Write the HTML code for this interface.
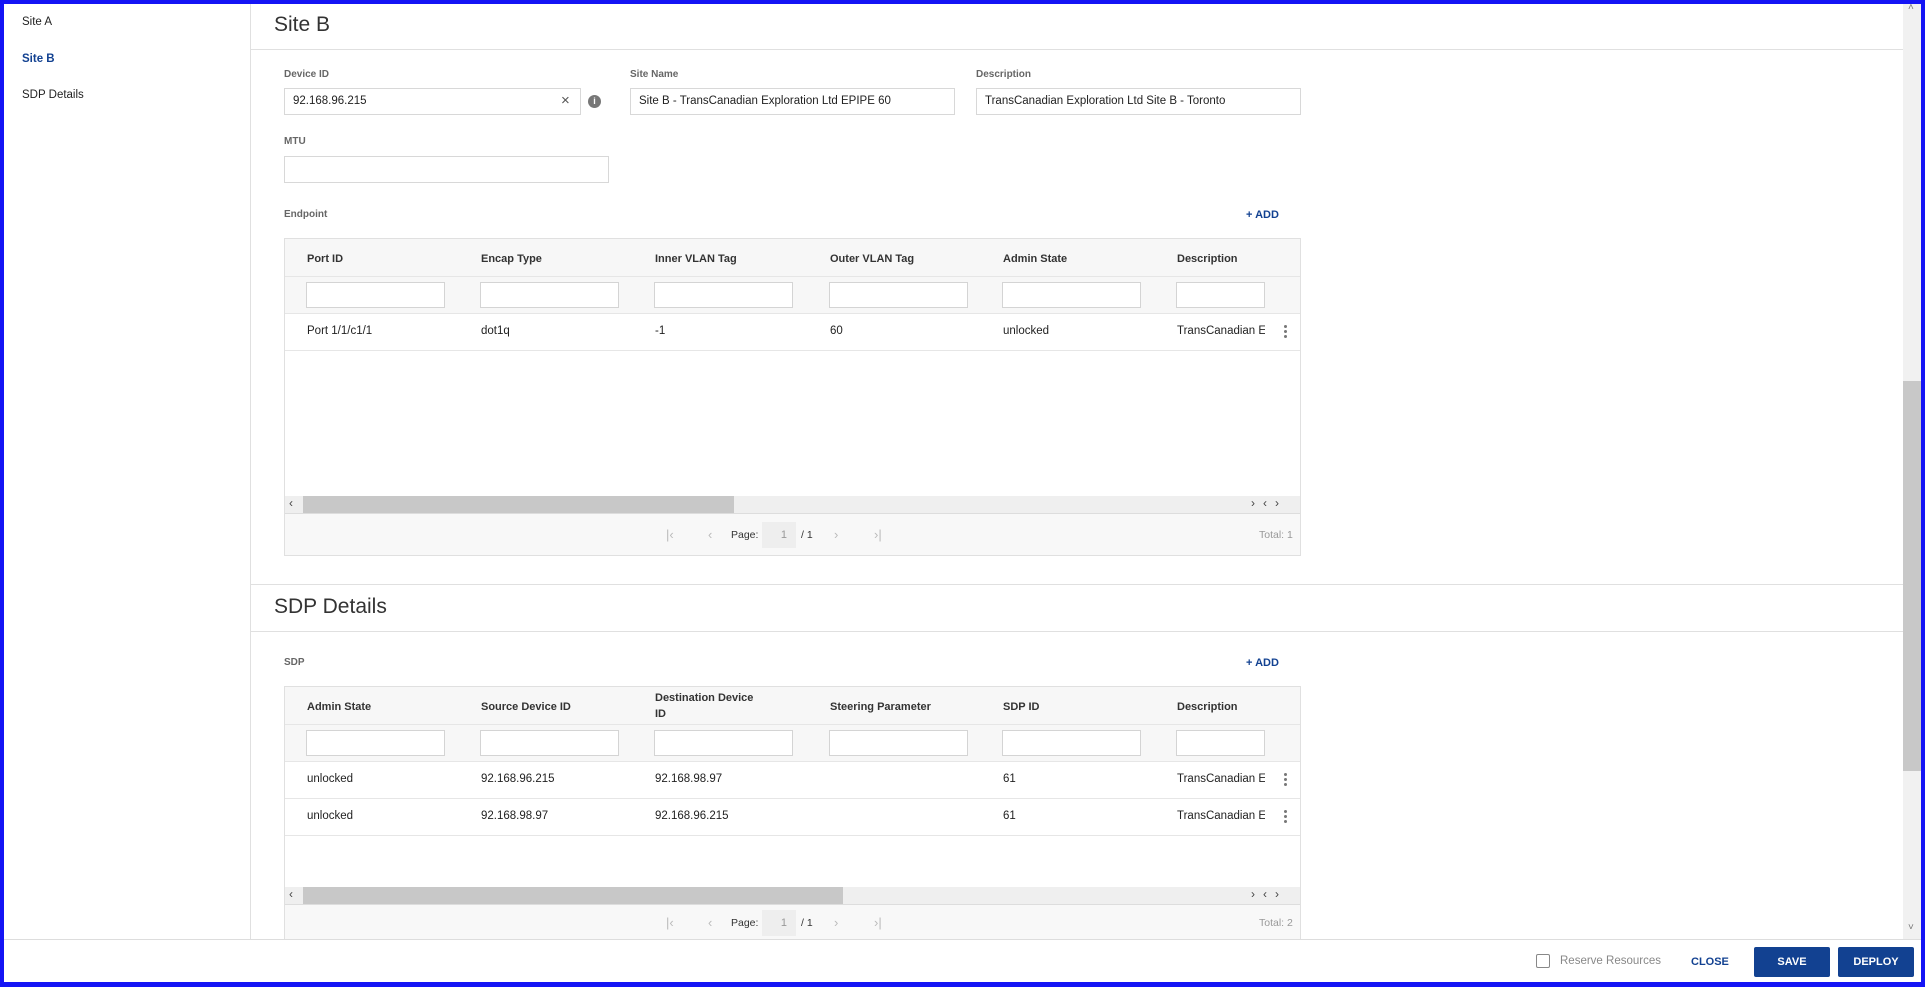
<!DOCTYPE html>
<html><head><meta charset="utf-8"><style>
*{box-sizing:border-box;margin:0;padding:0}
body{width:1925px;height:987px;overflow:hidden;background:#fff;font-family:"Liberation Sans",sans-serif;color:#222;position:relative}
.a{position:absolute}
.frame{position:absolute;left:0;top:0;width:1925px;height:987px;border:4px solid #1414f5;border-top-width:4px;border-bottom-width:5px;z-index:50;pointer-events:none}
.lbl{position:absolute;font-size:10px;font-weight:bold;color:#666}
.inp{position:absolute;border:1px solid #d8d8d8;background:#fff;font-size:11.5px;padding-left:8px;line-height:25px;color:#222}
.tbl{position:absolute;left:284px;width:1017px;border:1px solid #e0e0e0;background:#fff;overflow:hidden}
.th{position:absolute;font-size:11px;font-weight:bold;color:#333}
.td{position:absolute;font-size:11.5px;color:#222}
.fi{position:absolute;width:139px;height:26px;border:1px solid #d4d4d4;background:#fff}
.hl{position:absolute;left:0;right:0;height:1px;background:#e6e6e6}
.add{position:absolute;font-size:11px;font-weight:bold;color:#124191}
.kb{position:absolute;width:3px}
.kb i{display:block;width:3px;height:3px;border-radius:50%;background:#777;margin-bottom:2px}
.pg{position:absolute;font-size:10.5px;color:#999}
</style></head><body>
<div class="frame"></div>

<div class="a" style="left:250px;top:0;width:1px;height:939px;background:#e0e0e0"></div>
<div class="a" style="left:22px;top:16px;font-size:11.5px">Site A</div>
<div class="a" style="left:22px;top:53px;font-size:11.5px;font-weight:bold;color:#124191">Site B</div>
<div class="a" style="left:22px;top:89px;font-size:11.5px">SDP Details</div>

<div class="a" style="left:274px;top:13px;font-size:21px;color:#333">Site B</div>
<div class="a" style="left:251px;top:49px;width:1652px;height:1px;background:#e0e0e0"></div>

<div class="lbl" style="left:284px;top:69px">Device ID</div>
<div class="inp" style="left:284px;top:88px;width:297px;height:27px">92.168.96.215</div>
<div class="a" style="left:561px;top:92px;font-size:15px;color:#555">×</div>
<div class="a" style="left:588px;top:95px;width:13px;height:13px;border-radius:50%;background:#777;color:#fff;font-size:9px;font-weight:bold;text-align:center;line-height:13px">i</div>
<div class="lbl" style="left:630px;top:69px">Site Name</div>
<div class="inp" style="left:630px;top:88px;width:325px;height:27px">Site B - TransCanadian Exploration Ltd EPIPE 60</div>
<div class="lbl" style="left:976px;top:69px">Description</div>
<div class="inp" style="left:976px;top:88px;width:325px;height:27px">TransCanadian Exploration Ltd Site B - Toronto</div>

<div class="lbl" style="left:284px;top:136px">MTU</div>
<div class="inp" style="left:284px;top:156px;width:325px;height:27px"></div>

<div class="lbl" style="left:284px;top:209px">Endpoint</div>
<div class="add" style="left:1246px;top:209px">+ ADD</div>

<div class="tbl" style="top:238px;height:318px">
 <div class="a" style="left:0;top:0;right:0;height:75px;background:#f7f7f7"></div>
 <div class="hl" style="top:37px"></div>
 <div class="hl" style="top:74px"></div>
 <div class="th" style="left:22px;top:14px">Port ID</div>
 <div class="th" style="left:196px;top:14px">Encap Type</div>
 <div class="th" style="left:370px;top:14px">Inner VLAN Tag</div>
 <div class="th" style="left:545px;top:14px">Outer VLAN Tag</div>
 <div class="th" style="left:718px;top:14px">Admin State</div>
 <div class="th" style="left:892px;top:14px">Description</div>
 <div class="fi" style="left:21px;top:43px"></div>
 <div class="fi" style="left:195px;top:43px"></div>
 <div class="fi" style="left:369px;top:43px"></div>
 <div class="fi" style="left:544px;top:43px"></div>
 <div class="fi" style="left:717px;top:43px"></div>
 <div class="fi" style="left:891px;top:43px;width:89px"></div>
 <div class="td" style="left:22px;top:86px">Port 1/1/c1/1</div>
 <div class="td" style="left:196px;top:86px">dot1q</div>
 <div class="td" style="left:370px;top:86px">-1</div>
 <div class="td" style="left:545px;top:86px">60</div>
 <div class="td" style="left:718px;top:86px">unlocked</div>
 <div class="td" style="left:892px;top:86px;width:88px;overflow:hidden;white-space:nowrap">TransCanadian Exploration</div>
 <div class="kb" style="left:999px;top:86px"><i></i><i></i><i></i></div>
 <div class="hl" style="top:111px"></div>
 <div class="a" style="left:0;top:257px;right:0;height:17px;background:#efefef"></div>
 <div class="a" style="left:18px;top:257px;width:431px;height:17px;background:#c8c8c8"></div>
 <div class="a" style="left:4px;top:257px;font-size:12px;color:#444">‹</div>
 <div class="a" style="left:966px;top:257px;font-size:12px;color:#444;letter-spacing:8px">›‹›</div>
 <div class="hl" style="top:274px;background:#ddd"></div>
 <div class="a" style="left:0;top:275px;right:0;height:43px;background:#f8f8f8"></div>
 <div class="pg" style="left:381px;top:288px;font-size:13px;color:#bbb">|‹</div>
 <div class="pg" style="left:423px;top:288px;font-size:13px;color:#bbb">‹</div>
 <div class="pg" style="left:446px;top:290px;color:#333">Page:</div>
 <div class="a" style="left:477px;top:283px;width:34px;height:26px;background:#eee;font-size:11px;color:#999;text-align:right;padding-right:9px;line-height:26px">1</div>
 <div class="pg" style="left:516px;top:290px;color:#333">/ 1</div>
 <div class="pg" style="left:549px;top:288px;font-size:13px;color:#bbb">›</div>
 <div class="pg" style="left:589px;top:288px;font-size:13px;color:#bbb">›|</div>
 <div class="pg" style="left:974px;top:290px">Total: 1</div>
</div>

<div class="a" style="left:251px;top:584px;width:1652px;height:1px;background:#e0e0e0"></div>
<div class="a" style="left:274px;top:595px;font-size:21px;color:#333">SDP Details</div>
<div class="a" style="left:251px;top:631px;width:1652px;height:1px;background:#e0e0e0"></div>
<div class="lbl" style="left:284px;top:657px">SDP</div>
<div class="add" style="left:1246px;top:657px">+ ADD</div>

<div class="tbl" style="top:686px;height:260px">
 <div class="a" style="left:0;top:0;right:0;height:75px;background:#f7f7f7"></div>
 <div class="hl" style="top:37px"></div>
 <div class="hl" style="top:74px"></div>
 <div class="th" style="left:22px;top:14px">Admin State</div>
 <div class="th" style="left:196px;top:14px">Source Device ID</div>
 <div class="th" style="left:370px;top:3px;line-height:16px">Destination Device<br>ID</div>
 <div class="th" style="left:545px;top:14px">Steering Parameter</div>
 <div class="th" style="left:718px;top:14px">SDP ID</div>
 <div class="th" style="left:892px;top:14px">Description</div>
 <div class="fi" style="left:21px;top:43px"></div>
 <div class="fi" style="left:195px;top:43px"></div>
 <div class="fi" style="left:369px;top:43px"></div>
 <div class="fi" style="left:544px;top:43px"></div>
 <div class="fi" style="left:717px;top:43px"></div>
 <div class="fi" style="left:891px;top:43px;width:89px"></div>
 <div class="td" style="left:22px;top:86px">unlocked</div>
 <div class="td" style="left:196px;top:86px">92.168.96.215</div>
 <div class="td" style="left:370px;top:86px">92.168.98.97</div>
 <div class="td" style="left:718px;top:86px">61</div>
 <div class="td" style="left:892px;top:86px;width:88px;overflow:hidden;white-space:nowrap">TransCanadian Exploration</div>
 <div class="kb" style="left:999px;top:86px"><i></i><i></i><i></i></div>
 <div class="hl" style="top:111px"></div>
 <div class="td" style="left:22px;top:123px">unlocked</div>
 <div class="td" style="left:196px;top:123px">92.168.98.97</div>
 <div class="td" style="left:370px;top:123px">92.168.96.215</div>
 <div class="td" style="left:718px;top:123px">61</div>
 <div class="td" style="left:892px;top:123px;width:88px;overflow:hidden;white-space:nowrap">TransCanadian Exploration</div>
 <div class="kb" style="left:999px;top:123px"><i></i><i></i><i></i></div>
 <div class="hl" style="top:148px"></div>
 <div class="a" style="left:0;top:200px;right:0;height:17px;background:#efefef"></div>
 <div class="a" style="left:18px;top:200px;width:540px;height:17px;background:#c8c8c8"></div>
 <div class="a" style="left:4px;top:200px;font-size:12px;color:#444">‹</div>
 <div class="a" style="left:966px;top:200px;font-size:12px;color:#444;letter-spacing:8px">›‹›</div>
 <div class="hl" style="top:217px;background:#ddd"></div>
 <div class="a" style="left:0;top:218px;right:0;height:43px;background:#f8f8f8"></div>
 <div class="pg" style="left:381px;top:228px;font-size:13px;color:#bbb">|‹</div>
 <div class="pg" style="left:423px;top:228px;font-size:13px;color:#bbb">‹</div>
 <div class="pg" style="left:446px;top:230px;color:#333">Page:</div>
 <div class="a" style="left:477px;top:223px;width:34px;height:26px;background:#eee;font-size:11px;color:#999;text-align:right;padding-right:9px;line-height:26px">1</div>
 <div class="pg" style="left:516px;top:230px;color:#333">/ 1</div>
 <div class="pg" style="left:549px;top:228px;font-size:13px;color:#bbb">›</div>
 <div class="pg" style="left:589px;top:228px;font-size:13px;color:#bbb">›|</div>
 <div class="pg" style="left:974px;top:230px">Total: 2</div>
</div>

<div class="a" style="left:1903px;top:4px;width:18px;height:935px;background:#f1f1f1"></div>
<div class="a" style="left:1903px;top:381px;width:18px;height:390px;background:#c8c8c8"></div>
<div class="a" style="left:1908px;top:2px;font-size:10px;color:#777">˄</div>
<div class="a" style="left:1908px;top:922px;font-size:10px;color:#777">˅</div>

<div class="a" style="left:4px;top:939px;width:1917px;height:44px;background:#fff;border-top:1px solid #ddd;z-index:5">
 <div class="a" style="left:1532px;top:14px;width:14px;height:14px;border:1px solid #888;border-radius:2px"></div>
 <div class="a" style="left:1556px;top:15px;font-size:11.5px;color:#888">Reserve Resources</div>
 <div class="a" style="left:1687px;top:16px;font-size:11px;font-weight:bold;color:#124191">CLOSE</div>
 <div class="a" style="left:1750px;top:7px;width:76px;height:30px;background:#124191;border-radius:2px;color:#fff;font-size:11px;font-weight:bold;text-align:center;line-height:30px">SAVE</div>
 <div class="a" style="left:1834px;top:7px;width:76px;height:30px;background:#124191;border-radius:2px;color:#fff;font-size:11px;font-weight:bold;text-align:center;line-height:30px">DEPLOY</div>
</div>
</body></html>
